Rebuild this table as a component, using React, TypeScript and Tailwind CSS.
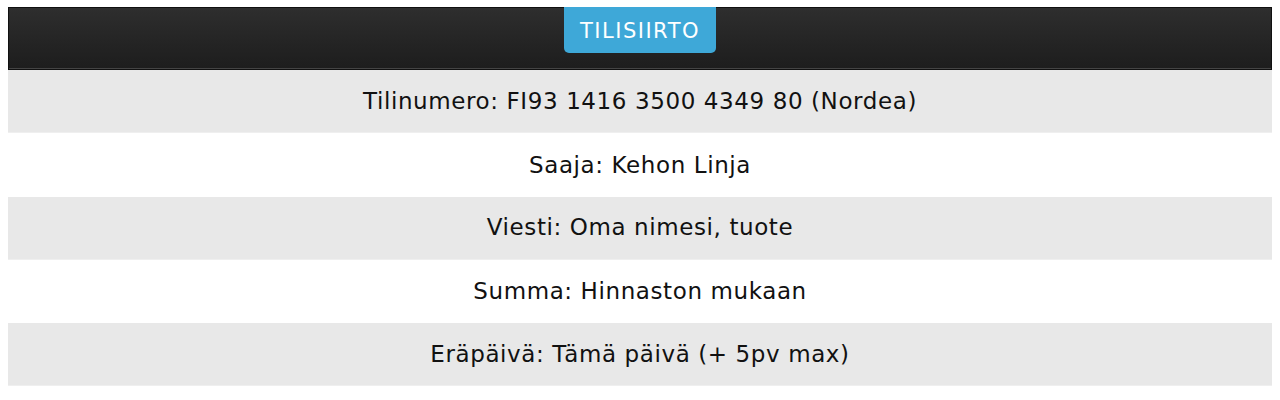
export default function App() {
  const rows = [
    "Tilinumero: FI93 1416 3500 4349 80 (Nordea)",
    "Saaja: Kehon Linja",
    "Viesti: Oma nimesi, tuote",
    "Summa: Hinnaston mukaan",
    "Eräpäivä: Tämä päivä (+ 5pv max)",
  ];
  return (
    <div className="bg-white px-2 pt-[7px] pb-4" style={{ fontFamily: '"DejaVu Sans", sans-serif' }}>
      <div className="flex h-[63px] justify-center border border-[#111] bg-gradient-to-b from-[#2e2e2e] to-[#1d1d1d] shadow-[inset_0_-1px_0_#444]">
        <div className="-mt-px flex h-[46px] w-[152px] items-center justify-center rounded-b-[5px] bg-[#3ea8d8] pt-[3px] text-[21px] tracking-[1.5px] text-white">
          TILISIIRTO
        </div>
      </div>
      {rows.map((r, i) => (
        <div
          key={i}
          className={`flex h-[63.3px] items-center justify-center text-[23px] tracking-[0.6px] text-[#111] ${i % 2 === 0 ? "bg-[#e8e8e8] border-b border-[#efefef]" : "bg-white"}`}
        >
          {r}
        </div>
      ))}
    </div>
  );
}
